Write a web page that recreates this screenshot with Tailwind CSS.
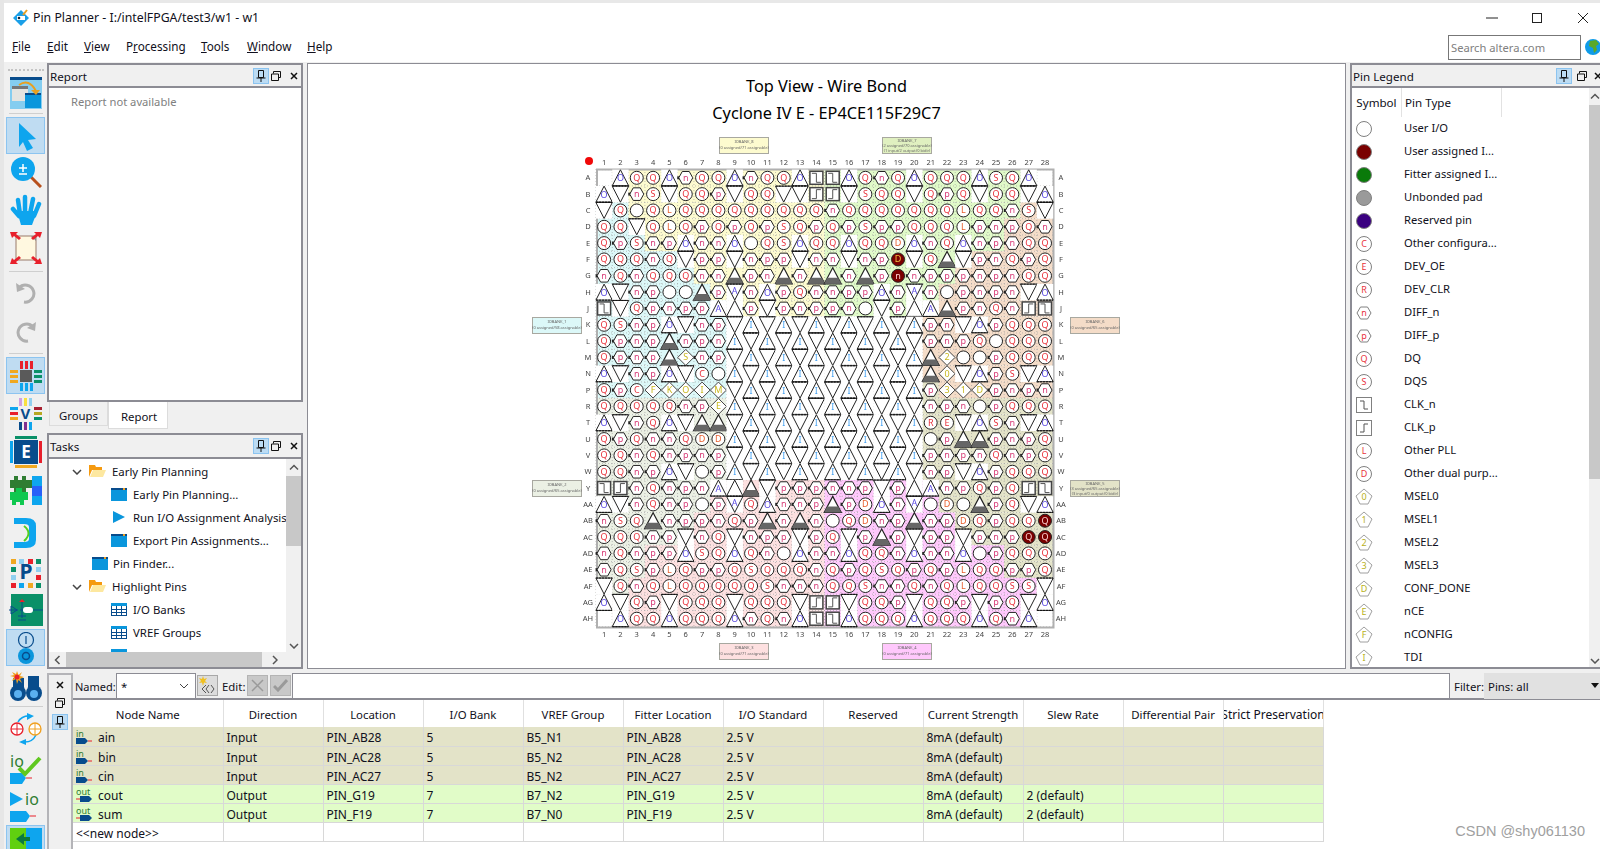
<!DOCTYPE html>
<html lang="en">
<head>
<meta charset="utf-8"/>
<title>Pin Planner</title>
<script src="https://cdn.jsdelivr.net/npm/@tailwindcss/browser@4"></script>
</head>
<body class="bg-[#f0f0f0] overflow-hidden">
<div class="flex w-[1600px] h-[849px] overflow-hidden relative font-['Noto_Sans',sans-serif] text-[11.4px] text-[#101020]">
  <div class="w-[4px] shrink-0 bg-[#e6e6e6]"></div>
  <div class="flex-1 min-w-0 flex flex-col">
    <div class="h-[3px] shrink-0 bg-[#e8e8e8]"></div>
    <!-- title bar -->
    <div class="h-[29px] bg-white flex items-center pl-[8px] shrink-0">
      <svg class="shrink-0" width="18" height="18" viewBox="0 0 18 18"><path d="M9 1 17 9 9 17 1 9Z" fill="#1a9fe8"/><path d="M5 7h8v4H5Z" fill="#fff"/><circle cx="7" cy="9" r="1.3" fill="#123"/><path d="M11 6 15 1" stroke="#e8a020" stroke-width="2"/></svg>
      <span class="ml-[3px] pt-[1px] text-[12.3px]">Pin Planner - I:/intelFPGA/test3/w1 - w1</span>
      <div class="ml-auto flex items-center">
        <svg width="46" height="16" viewBox="0 0 46 16"><path d="M18 8h12" stroke="#222"/></svg>
        <svg width="46" height="16" viewBox="0 0 46 16"><rect x="18.500" y="3.500" width="9" height="9" fill="none" stroke="#222"/></svg>
        <svg width="40" height="16" viewBox="0 0 40 16"><path d="M18 3l10 10M28 3 18 13" stroke="#222"/></svg>
      </div>
    </div>
    <!-- menu bar -->
    <div class="h-[30px] bg-white flex items-center pl-[8px] shrink-0 text-[11.7px]">
      <span class="w-[35px]"><u>F</u>ile</span>
      <span class="w-[37px]"><u>E</u>dit</span>
      <span class="w-[42px]"><u>V</u>iew</span>
      <span class="w-[75px]">P<u>r</u>ocessing</span>
      <span class="w-[46px]"><u>T</u>ools</span>
      <span class="w-[60px]"><u>W</u>indow</span>
      <span><u>H</u>elp</span>
      <div class="ml-auto flex items-center">
        <div class="w-[133px] h-[25px] border border-[#777] flex items-center pl-[2px] pt-[2px] text-[11.2px] text-[#808080]">Search altera.com</div>
        <svg class="ml-[3px] shrink-0" width="16" height="18" viewBox="0 0 16 18"><circle cx="9" cy="9" r="8" fill="#0f9be8"/><path d="M6 3l6-1 3 4-3 2 1 4-3 3-1-5-4-2Z" fill="#5aa82a"/></svg>
      </div>
    </div>
    <div class="flex-1 min-h-0 flex">
      <!-- main toolbar -->
      <div class="w-[43px] shrink-0 flex flex-col items-center overflow-hidden">
        <div class="h-[14px] w-[36px] shrink-0 flex items-center"><div class="w-full mt-[1px] border-t-2 border-dotted border-[#c4c4c4]"></div></div>
        <div class="h-[34px] shrink-0 flex items-center justify-center"><svg width="32" height="32" viewBox="0 0 32 32"><rect width="32" height="32" fill="#84cdf0"/><rect width="32" height="3" fill="#084c8c"/><rect x="2" y="9" width="16" height="15" fill="#e4e4e0"/><rect x="2" y="9" width="16" height="3" fill="#777"/><rect x="15" y="16" width="16" height="15" fill="#0a96dc"/><rect x="15" y="16" width="16" height="2" fill="#084c8c"/><path d="M9 8Q19 1 26 14" fill="none" stroke="#e8a020" stroke-width="2"/><path d="M21 13h9l-4 5Z" fill="#e8a020"/></svg></div>
        <div class="h-[7px] w-[34px] shrink-0 flex items-center"><div class="w-full border-t border-[#cfcfcf]"></div></div>
        <div class="h-[37px] w-[39px] shrink-0 bg-[#bfdcf2] border border-[#8cc4f0] flex items-center justify-center"><svg width="32" height="32" viewBox="0 0 32 32"><path d="M9 3 26 19 18 20 23 28 17 31 13 22 9 27Z" fill="#0ea5ee"/></svg></div>
        <div class="h-[36px] shrink-0 flex items-center justify-center"><svg width="32" height="32" viewBox="0 0 32 32"><path d="M19 19 31 31" stroke="#b8501c" stroke-width="3"/><circle cx="13" cy="13" r="12" fill="#0ea5ee"/><path d="M9 12h8M13 8v8M9 18h8" stroke="#fff" stroke-width="1.5"/></svg></div>
        <div class="h-[40px] shrink-0 flex items-center justify-center"><svg width="32" height="32" viewBox="0 0 32 32"><g stroke="#0ea5ee" stroke-width="4.5" stroke-linecap="round" fill="none"><path d="M10 20 8 6M15 20V3M20 20 23 5M24 22 29 10M9 22 3 15"/></g><path d="M7 17h18v6l-3 8H11Z" fill="#0ea5ee"/></svg></div>
        <div class="h-[36px] shrink-0 flex items-center justify-center"><svg width="34" height="36" viewBox="0 0 34 36"><rect x="7" y="6" width="20" height="24" fill="#fff8e0" stroke="#9a7a6a"/><path d="M22 6h5v5Z" fill="#888"/><path d="M1 2h8L7 4l5 4-2 2-5-4-2 2Z M33 2h-8l2 2-5 4 2 2 5-4 2 2Z M1 34h8l-2-2 5-4-2-2-5 4-2-2Z M33 34h-8l2-2-5-4 2-2 5 4 2-2Z" fill="#e8202c"/></svg></div>
        <div class="h-[7px] w-[34px] shrink-0 flex items-end pb-[1px]"><div class="w-full border-t border-[#cfcfcf]"></div></div>
        <div class="h-[40px] shrink-0 flex items-center justify-center"><svg width="22" height="22" viewBox="0 0 22 22"><path d="M4 6A8.500 8.500 0 1 1 9 20" fill="none" stroke="#b0b0b0" stroke-width="3"/><path d="M1 1 2 10 10 7Z" fill="#b0b0b0"/></svg></div>
        <div class="h-[38px] shrink-0 flex items-center justify-center"><svg width="22" height="22" viewBox="0 0 22 22"><path d="M18 6A8.500 8.500 0 1 0 13 20" fill="none" stroke="#b0b0b0" stroke-width="3"/><path d="M21 1 20 10 12 7Z" fill="#b0b0b0"/></svg></div>
        <div class="h-[6px] w-[34px] shrink-0 flex items-start pt-[2px]"><div class="w-full border-t border-[#cfcfcf]"></div></div>
        <div class="h-[37px] w-[39px] shrink-0 bg-[#bfdcf2] border border-[#8cc4f0] flex items-center justify-center"><svg width="32" height="32" viewBox="0 0 32 32"><rect x="10" y="10" width="12" height="12" fill="#5a5a5a"/><path d="M10 1h3v8h-3ZM15 1h3v8h-3ZM20 1h3v8h-3Z" fill="#e8202c"/><path d="M10 23h3v8h-3ZM15 23h3v8h-3ZM20 23h3v8h-3Z" fill="#0ea5ee"/><path d="M0 10h8v3H0ZM0 15h8v3H0ZM0 20h8v3H0Z" fill="#f0a820"/><path d="M24 10h8v3h-8ZM24 15h8v3h-8ZM24 20h8v3h-8Z" fill="#0a9068"/></svg></div>
        <div class="h-[40px] shrink-0 flex items-center justify-center"><svg width="32" height="32" viewBox="0 0 32 32"><path d="M9 0h3v8H9Z" fill="#d0a0e0"/><path d="M14 0h3v8h-3Z" fill="#f8e040"/><path d="M19 0h3v8h-3Z" fill="#90d0f0"/><path d="M0 9h8v3H0Z" fill="#0ea5ee"/><path d="M0 14h8v3H0Z" fill="#e8202c"/><path d="M0 19h8v3H0Z" fill="#f0a820"/><path d="M24 9h8v3h-8Z" fill="#a82030"/><path d="M24 14h8v3h-8Z" fill="#b8a820"/><path d="M24 19h8v3h-8Z" fill="#0a9068"/><path d="M9 24h3v8H9Z" fill="#084c8c"/><path d="M14 24h3v8h-3Z" fill="#803090"/><path d="M19 24h3v8h-3Z" fill="#0ea5ee"/><text x="15.500" y="21" text-anchor="middle" font-size="15" font-weight="700" fill="#084c8c">V</text></svg></div>
        <div class="h-[36px] shrink-0 flex items-center justify-center"><svg width="32" height="32" viewBox="0 0 32 32"><rect x="4" y="4" width="24" height="24" fill="#084c8c"/><path d="M5 0h22v3H5Z" fill="#0a9068"/><path d="M5 29h22v3H5Z" fill="#f0a820"/><path d="M0 5h3v22H0Z" fill="#0ea5ee"/><path d="M29 5h3v22h-3Z" fill="#e8202c"/><text x="16" y="22" text-anchor="middle" font-size="17" font-weight="700" fill="#fff">E</text></svg></div>
        <div class="h-[42px] shrink-0 flex items-center justify-center"><svg width="32" height="30" viewBox="0 0 32 30"><path d="M4 0h4v4h4V0h4v4h6v8h-6v5H4v-5H0V4h4Z" fill="#2f7d32"/><path d="M6 12h6v4h6v8h-4v5h-4v-3H6v3H2v-5H0v-8h6Z" fill="#10c850"/><rect x="22" y="0" width="10" height="10" fill="#0ea5ee"/><rect x="22" y="10" width="10" height="10" fill="#2860f8"/><rect x="22" y="20" width="10" height="9" fill="#0ea5ee"/></svg></div>
        <div class="h-[42px] shrink-0 flex items-center justify-center"><svg width="26" height="32" viewBox="0 0 26 32"><path d="M1 1h12q10 0 10 8v14q0 8-10 8H1v-6h10q5 0 5-3V10q0-3-5-3H1Z" fill="#0ea5ee"/><path d="M11 9q9 7 0 15" fill="none" stroke="#50d020" stroke-width="2"/></svg></div>
        <div class="h-[37px] shrink-0 flex items-center justify-center"><svg width="32" height="30" viewBox="0 0 32 30"><rect x="1" y="1" width="5" height="5" fill="#f0a820"/><rect x="9" y="1" width="5" height="5" fill="#90d0f0"/><rect x="18" y="1" width="5" height="5" fill="#e8202c"/><rect x="26" y="1" width="5" height="5" fill="#0a9068"/><rect x="1" y="9" width="5" height="5" fill="#0a9068"/><rect x="26" y="9" width="5" height="5" fill="#90d0f0"/><rect x="1" y="17" width="5" height="5" fill="#90d0f0"/><rect x="26" y="17" width="5" height="5" fill="#e8202c"/><rect x="1" y="25" width="5" height="5" fill="#e8202c"/><rect x="9" y="25" width="5" height="5" fill="#0ea5ee"/><rect x="18" y="25" width="5" height="5" fill="#f0a820"/><rect x="26" y="25" width="5" height="5" fill="#0a9068"/><text x="16" y="21" text-anchor="middle" font-size="21" font-weight="700" fill="#084c8c">P</text></svg></div>
        <div class="h-[38px] shrink-0 flex items-center justify-center"><svg width="34" height="32" viewBox="0 0 34 32"><rect x="2" y="0" width="32" height="32" fill="#0a9068"/><path d="M0 16h9M24 16h10M11 16h10M13 6v18M9 22h8M9 26h8" stroke="#084c8c"/><path d="M2 12l6 4-6 4Z" fill="none" stroke="#084c8c"/><rect x="14" y="13" width="10" height="6" rx="3" fill="#fff"/><path d="M13 5l3 3h-6Z" fill="#e8202c"/></svg></div>
        <div class="h-[37px] w-[39px] shrink-0 bg-[#bfdcf2] border border-[#8cc4f0] flex flex-col items-center justify-center"><svg width="24" height="32" viewBox="0 0 24 32"><circle cx="12" cy="8" r="7.500" fill="none" stroke="#084c8c" stroke-width="1.200"/><path d="M12 4v8" stroke="#084c8c" stroke-width="1.200"/><circle cx="12" cy="24" r="8" fill="#0a96dc"/><circle cx="12" cy="24" r="3.500" fill="none" stroke="#084c8c" stroke-width="1.500"/></svg></div>
        <div class="h-[40px] shrink-0 flex items-center justify-center"><svg width="32" height="32" viewBox="0 0 32 32"><circle cx="8" cy="23" r="8" fill="#084c8c"/><circle cx="24" cy="23" r="8" fill="#084c8c"/><circle cx="8" cy="24" r="4" fill="#5ab0f0"/><circle cx="24" cy="24" r="4" fill="#5ab0f0"/><rect x="3" y="8" width="11" height="12" fill="#084c8c"/><rect x="18" y="6" width="11" height="14" fill="#084c8c"/><path d="M7 1l1.500 4L12 2l-2 4 4 1-4 2 2 4-3.500-3L7 14l-1-5-4 2 2-4-4-1 4-1-2-3 4 2Z" fill="#f0a020"/><circle cx="7" cy="7" r="2.500" fill="#e8202c"/></svg></div>
        <div class="h-[3px] w-[34px] shrink-0 border-t border-[#cfcfcf]"></div>
        <div class="h-[40px] shrink-0 flex items-center justify-center"><svg width="32" height="32" viewBox="0 0 32 32"><path d="M8 9Q12 2 21 3M26 22q-4 8-13 7" fill="none" stroke="#0ea5ee" stroke-width="1.500"/><path d="M17 0l7 3-7 4Z M16 26l-7 3 7 3Z" fill="#0ea5ee"/><circle cx="7" cy="16" r="6" fill="#fff" stroke="#e8202c" stroke-width="1.300"/><path d="M1 16h12M7 10v12" stroke="#e8202c"/><circle cx="25" cy="16" r="6" fill="#fff" stroke="#f0a020" stroke-width="1.300"/><path d="M19 16h12M25 10v12" stroke="#f0a020"/></svg></div>
        <div class="h-[39px] shrink-0 flex items-center justify-center"><svg class="shrink-0" width="32" height="44" viewBox="0 -6 32 44"><text x="0" y="14" font-size="16" fill="#2f7d32">io</text><path d="M0 20h12l4 5-4 6H0Z" fill="#0ea5ee"/><path d="M16 25h6" stroke="#e8202c"/><path d="M9 15l6 6L30 5" fill="none" stroke="#60c820" stroke-width="4"/></svg></div>
        <div class="h-[37px] shrink-0 flex items-center justify-center"><svg class="shrink-0" width="32" height="44" viewBox="0 -6 32 44"><path d="M0 1 13 8 0 15Z" fill="#0ea5ee"/><text x="15" y="14" font-size="16" fill="#2f7d32">io</text><path d="M0 20h16l4 5-4 6H0Z" fill="#0ea5ee"/><path d="M20 25h6" stroke="#e8202c"/></svg></div>
        <div class="h-[37px] w-[39px] shrink-0 bg-[#bfdcf2] border border-[#8cc4f0] flex items-center justify-center"><svg width="32" height="32" viewBox="0 0 32 32"><rect width="16" height="32" fill="#60d010"/><rect x="16" width="16" height="32" fill="#0ea5ee"/><path d="M6 11 14 5v4h6v4h-6v4Z" fill="#0a7a40"/></svg></div>
      </div>
      <div class="flex-1 min-w-0 flex flex-col">
        <div class="h-[610px] shrink-0 flex pt-[1px]">
          <!-- left docks -->
          <div class="w-[256px] shrink-0 flex flex-col">
            <div class="h-[339px] border-2 border-[#8c8c94] flex flex-col">
              <div class="h-[23px] shrink-0 flex items-center border-b-2 border-[#8c8c94] pl-[1px]">
                <span class="mt-[2px] text-[11.6px]">Report</span>
                <div class="ml-auto flex items-center pr-[3px]">
                  <svg width="16" height="16" viewBox="0 0 16 16"><rect x=".5" y=".5" width="15" height="15" fill="#bcdcf4" stroke="#8cc4f0"/><path d="M5.500 2.500h5v7h-5ZM3.500 10h9M8 10v4" fill="none" stroke="#111"/></svg>
                  <svg class="ml-[2px]" width="10" height="10" viewBox="0 0 10 10"><path d="M2.500 2.500V.5h7v6h-2M.5 3h7v6.500h-7Z" fill="none" stroke="#111"/></svg>
                  <svg class="ml-[9px]" width="8" height="8" viewBox="0 0 8 8"><path d="M1 1l6 6M7 1 1 7" stroke="#111" stroke-width="1.500"/></svg>
                </div>
              </div>
              <div class="flex-1 bg-white pl-[22px] pt-[6px] text-[11.2px] text-[#808080]">Report not available</div>
            </div>
            <div class="h-[27px] shrink-0 flex pl-[2px]">
              <div class="w-[59px] h-[24px] pt-[4px] border border-t-0 border-[#dcdcdc] flex items-center justify-center">Groups</div>
              <div class="w-[60px] h-[27px] pt-[4px] pl-[2px] bg-white border border-t-0 border-[#dcdcdc] flex items-center justify-center">Report</div>
            </div>
            <div class="mt-[4px] h-[236px] border-2 border-[#8c8c94] flex flex-col">
              <div class="h-[24px] shrink-0 flex items-center border-b-2 border-[#8c8c94] pl-[1px]">
                <span class="mt-[1px] text-[11.6px]">Tasks</span>
                <div class="ml-auto flex items-center pr-[3px]">
                  <svg width="16" height="16" viewBox="0 0 16 16"><rect x=".5" y=".5" width="15" height="15" fill="#bcdcf4" stroke="#8cc4f0"/><path d="M5.500 2.500h5v7h-5ZM3.500 10h9M8 10v4" fill="none" stroke="#111"/></svg>
                  <svg class="ml-[2px]" width="10" height="10" viewBox="0 0 10 10"><path d="M2.500 2.500V.5h7v6h-2M.5 3h7v6.500h-7Z" fill="none" stroke="#111"/></svg>
                  <svg class="ml-[9px]" width="8" height="8" viewBox="0 0 8 8"><path d="M1 1l6 6M7 1 1 7" stroke="#111" stroke-width="1.500"/></svg>
                </div>
              </div>
              <div class="flex-1 min-h-0 flex">
                <div class="w-[237px] shrink-0 bg-white overflow-hidden">
                  <div class="h-[23px] mt-[1px] flex items-center pl-[23px]"><svg class="shrink-0" width="10" height="6" viewBox="0 0 10 6"><path d="M1 1l4 4 4-4" fill="none" stroke="#444" stroke-width="1.500"/></svg><svg class="ml-[7px] shrink-0" width="17" height="13" viewBox="0 0 17 13"><path d="M0 0h6l1 2h6v3H3L0 12Z" fill="#f59a10"/><path d="M4 5h13l-3 7H1Z" fill="#fde8a0"/></svg><span class="ml-[6px] whitespace-nowrap">Early Pin Planning</span></div>
                  <div class="h-[23px] flex items-center pl-[62px]"><svg class="shrink-0" width="16" height="13" viewBox="0 0 16 13"><rect width="16" height="13" fill="#0a96dc"/><rect width="16" height="2" fill="#084c8c"/><rect x="12" width="2" height="2" fill="#f0a020"/></svg><span class="ml-[6px] whitespace-nowrap">Early Pin Planning...</span></div>
                  <div class="h-[23px] flex items-center pl-[62px]"><svg class="shrink-0" width="16" height="13" viewBox="0 0 16 13"><path d="M2 0 14 6 2 12Z" fill="#0a96dc"/></svg><span class="ml-[6px] whitespace-nowrap">Run I/O Assignment Analysis</span></div>
                  <div class="h-[23px] flex items-center pl-[62px]"><svg class="shrink-0" width="16" height="13" viewBox="0 0 16 13"><rect width="16" height="13" fill="#0a96dc"/><rect width="16" height="2" fill="#084c8c"/><rect x="12" width="2" height="2" fill="#f0a020"/></svg><span class="ml-[6px] whitespace-nowrap">Export Pin Assignments...</span></div>
                  <div class="h-[23px] flex items-center pl-[43px]"><svg class="shrink-0" width="16" height="13" viewBox="0 0 16 13"><rect width="16" height="13" fill="#0a96dc"/><rect width="16" height="2" fill="#084c8c"/><rect x="12" width="2" height="2" fill="#f0a020"/></svg><span class="ml-[5px] whitespace-nowrap">Pin Finder...</span></div>
                  <div class="h-[23px] flex items-center pl-[23px]"><svg class="shrink-0" width="10" height="6" viewBox="0 0 10 6"><path d="M1 1l4 4 4-4" fill="none" stroke="#444" stroke-width="1.500"/></svg><svg class="ml-[7px] shrink-0" width="17" height="13" viewBox="0 0 17 13"><path d="M0 0h6l1 2h6v3H3L0 12Z" fill="#f59a10"/><path d="M4 5h13l-3 7H1Z" fill="#fde8a0"/></svg><span class="ml-[6px] whitespace-nowrap">Highlight Pins</span></div>
                  <div class="h-[23px] flex items-center pl-[62px]"><svg class="shrink-0" width="16" height="13" viewBox="0 0 16 13"><rect x=".5" y=".5" width="15" height="12" fill="#fff" stroke="#084c8c"/><rect width="16" height="3" fill="#0a96dc"/><path d="M0 6.500h16M0 9.500h16M5.500 3v10M10.500 3v10" stroke="#084c8c"/></svg><span class="ml-[6px] whitespace-nowrap">I/O Banks</span></div>
                  <div class="h-[23px] flex items-center pl-[62px]"><svg class="shrink-0" width="16" height="13" viewBox="0 0 16 13"><rect x=".5" y=".5" width="15" height="12" fill="#fff" stroke="#084c8c"/><rect width="16" height="3" fill="#0a96dc"/><path d="M0 6.500h16M0 9.500h16M5.500 3v10M10.500 3v10" stroke="#084c8c"/></svg><span class="ml-[6px] whitespace-nowrap">VREF Groups</span></div>
                  <div class="h-[23px] flex items-center pl-[62px]"><svg class="shrink-0" width="16" height="13" viewBox="0 0 16 13"><rect x=".5" y=".5" width="15" height="12" fill="#fff" stroke="#084c8c"/><rect width="16" height="3" fill="#0a96dc"/><path d="M0 6.500h16M0 9.500h16M5.500 3v10M10.500 3v10" stroke="#084c8c"/></svg></div>
                </div>
                <div class="w-[15px] shrink-0 flex flex-col items-center bg-[#f0f0f0]">
                  <svg class="h-[17px] shrink-0" width="10" height="6" viewBox="0 0 10 6"><path d="M1 5l4-4 4 4" fill="none" stroke="#555" stroke-width="1.500"/></svg>
                  <div class="w-full h-[70px] shrink-0 bg-[#c8c8c8]"></div>
                  <svg class="mt-auto mb-[3px] shrink-0" width="10" height="6" viewBox="0 0 10 6"><path d="M1 1l4 4 4-4" fill="none" stroke="#555" stroke-width="1.500"/></svg>
                </div>
              </div>
              <div class="h-[15px] shrink-0 flex items-center">
                <svg class="w-[17px] shrink-0" width="6" height="10" viewBox="0 0 6 10"><path d="M5 1 1 5l4 4" fill="none" stroke="#555" stroke-width="1.500"/></svg>
                <div class="w-[196px] h-full bg-[#c8c8c8]"></div>
                <svg class="ml-[10px]" width="6" height="10" viewBox="0 0 6 10"><path d="M1 1l4 4-4 4" fill="none" stroke="#555" stroke-width="1.500"/></svg>
              </div>
            </div>
          </div>
          <!-- chip canvas -->
          <div class="ml-[4px] w-[1039px] h-[606px] shrink-0 relative bg-white border border-[#8c8c94] overflow-hidden">
            <svg id="chip" class="absolute left-0 top-0 blur-[0.35px]" width="1037" height="604" viewBox="308 64 1037 604"></svg>
            <div class="relative pt-[9px] text-center text-[16.3px] leading-[27px] text-black">
              <div>Top View - Wire Bond</div>
              <div>Cyclone IV E - EP4CE115F29C7</div>
            </div>
          </div>
          <!-- pin legend -->
          <div class="ml-[4px] flex-1 min-w-0 h-[606px] border-2 border-r-0 border-[#8c8c94] flex flex-col">
            <div class="h-[23px] shrink-0 flex items-center border-b-2 border-[#8c8c94] pl-[1px]">
              <span class="mt-[2px] text-[11.6px]">Pin Legend</span>
              <div class="ml-auto flex items-center">
                <svg width="16" height="16" viewBox="0 0 16 16"><rect x=".5" y=".5" width="15" height="15" fill="#bcdcf4" stroke="#8cc4f0"/><path d="M5.500 2.500h5v7h-5ZM3.500 10h9M8 10v4" fill="none" stroke="#111"/></svg>
                <svg class="ml-[5px]" width="10" height="10" viewBox="0 0 10 10"><path d="M2.500 2.500V.5h7v6h-2M.5 3h7v6.500h-7Z" fill="none" stroke="#111"/></svg>
                <svg class="ml-[7px]" width="6" height="8" viewBox="0 0 6 8"><path d="M1 1l6 6M7 1 1 7" stroke="#111" stroke-width="1.500"/></svg>
              </div>
            </div>
            <div class="flex-1 min-h-0 flex text-[11.2px]">
              <div class="flex-1 min-w-0 bg-white overflow-hidden">
                <div class="flex h-[29px] text-[11.6px]">
                  <div class="w-[50px] flex items-center justify-center border-r border-[#e2e2e2]">Symbol</div>
                  <div class="w-[100px] flex items-center pl-[3px] border-r border-[#e2e2e2]">Pin Type</div>
                </div>
                <div id="legend"></div>
              </div>
              <div class="w-[11px] shrink-0 flex flex-col items-center">
                <svg class="h-[17px] shrink-0" width="10" height="6" viewBox="0 0 10 6"><path d="M1 5l4-4 4 4" fill="none" stroke="#555" stroke-width="1.500"/></svg>
                <div class="w-full h-[374px] shrink-0 bg-[#c8c8c8]"></div>
                <svg class="mt-auto mb-[3px] shrink-0" width="10" height="6" viewBox="0 0 10 6"><path d="M1 1l4 4 4-4" fill="none" stroke="#555" stroke-width="1.500"/></svg>
              </div>
            </div>
          </div>
        </div>
        <!-- node table dock -->
        <div class="flex-1 min-h-0 flex pt-[1px]">
          <div class="w-[26px] shrink-0 border-l-2 border-r-2 border-t-2 border-[#b4b4b8] flex flex-col items-center pt-[6px]">
            <svg width="8" height="8" viewBox="0 0 8 8"><path d="M1 1l6 6M7 1 1 7" stroke="#111" stroke-width="1.500"/></svg>
            <svg class="mt-[9px]" width="10" height="10" viewBox="0 0 10 10"><path d="M2.500 2.500V.5h7v6h-2M.5 3h7v6.500h-7Z" fill="none" stroke="#111"/></svg>
            <svg class="mt-[6px]" width="16" height="16" viewBox="0 0 16 16"><rect x=".5" y=".5" width="15" height="15" fill="#bcdcf4" stroke="#8cc4f0"/><path d="M5.500 2.500h5v7h-5ZM3.500 10h9M8 10v4" fill="none" stroke="#111"/></svg>
          </div>
          <div class="flex-1 min-w-0 flex flex-col">
            <div class="h-[27px] shrink-0 flex items-center pl-[2px] border-b-2 border-[#8c8c94]">
              <span class="w-[41px] mt-[3px] text-[11px] whitespace-nowrap">Named:</span>
              <div class="w-[80px] h-[26px] bg-white border border-[#8c8c94] flex items-center pl-[4px] pr-[6px] justify-between"><span class="mt-[3px]">*</span><svg width="10" height="6" viewBox="0 0 10 6"><path d="M1 1l4 4 4-4" fill="none" stroke="#444"/></svg></div>
              <div class="ml-[1px] w-[21px] h-[21px] bg-[#dcdcdc] border border-[#a8a8a8] flex items-center justify-center"><svg width="19" height="19" viewBox="0 0 19 19"><path d="M5 0l1 3 3-1-2 3 2 2-3-.5L5 10 4 6.500 1 7l2-2-2-3 3 1Z" fill="#f0c020"/><path d="M8 9l-4 4 4 4M11 9l-3 4 3 4M13 9l3 4-3 4" fill="none" stroke="#555"/></svg></div>
              <span class="ml-[4px] w-[25px] mt-[3px]">Edit:</span>
              <div class="w-[21px] h-[21px] bg-[#c8c8c8] border border-[#b4b4b4] flex items-center justify-center"><svg width="13" height="13" viewBox="0 0 13 13"><path d="M1 1l11 11M12 1 1 12" stroke="#9a9a9a" stroke-width="1.500"/></svg></div>
              <div class="ml-[2px] w-[21px] h-[21px] bg-[#c8c8c8] border border-[#b4b4b4] flex items-center justify-center"><svg width="15" height="13" viewBox="0 0 15 13"><path d="M1 7l4 4 9-10" fill="none" stroke="#9a9a9a" stroke-width="3"/></svg></div>
              <div class="ml-[1px] w-[1158px] h-[26px] bg-white border border-[#8c8c94]"></div>
              <span class="ml-[4px] w-[30px] mt-[3px]">Filter:</span>
              <div class="flex-1 h-[26px] bg-[#e1e1e1] flex items-center pl-[4px] pr-[1px] justify-between"><span class="mt-[3px]">Pins: all</span><svg width="8" height="5" viewBox="0 0 8 5"><path d="M0 0h8L4 5Z" fill="#111"/></svg></div>
            </div>
            <div class="flex-1 min-h-0 bg-white overflow-hidden text-[12px]">
              <table class="table-fixed border-collapse w-[1250px] [&_td]:border-r [&_td]:border-b [&_td]:border-[#d8d8d8] [&_td]:pl-[3px] [&_td]:pt-[4px] [&_td]:pb-0 [&_td]:pr-0 [&_td]:leading-[14px] [&_td]:h-[19px] [&_td]:whitespace-nowrap [&_td]:overflow-hidden [&_th]:border-r [&_th]:border-[#e0e0e0] [&_th]:font-normal [&_th]:text-[11.4px] [&_th]:h-[27px] [&_th]:pt-[2px] [&_th]:pb-0 [&_th]:px-0 [&_th]:whitespace-nowrap">
                <colgroup><col class="w-[150px]"/><col class="w-[100px]"/><col class="w-[100px]"/><col class="w-[100px]"/><col class="w-[100px]"/><col class="w-[100px]"/><col class="w-[100px]"/><col class="w-[100px]"/><col class="w-[100px]"/><col class="w-[100px]"/><col class="w-[100px]"/><col class="w-[100px]"/></colgroup>
                <tr><th>Node Name</th><th>Direction</th><th>Location</th><th>I/O Bank</th><th>VREF Group</th><th>Fitter Location</th><th>I/O Standard</th><th>Reserved</th><th>Current Strength</th><th>Slew Rate</th><th>Differential Pair</th><th><div class="w-full flex justify-center overflow-hidden text-[12px]"><span class="shrink-0">Strict Preservation</span></div></th></tr>
                <tr class="bg-[#e3e3c8]"><td><div class="flex items-center h-[14px]"><svg class="shrink-0" width="18" height="18" viewBox="0 0 18 18"><text x="0" y="8" font-size="9" fill="#2f7d32">in</text><path d="M0 9h9l3 3-3 3H0Z" fill="#084c8c"/><path d="M12 12h4" stroke="#e8202c"/></svg><span class="ml-[4px]">ain</span></div></td><td>Input</td><td>PIN_AB28</td><td>5</td><td>B5_N1</td><td>PIN_AB28</td><td>2.5 V</td><td></td><td>8mA (default)</td><td></td><td></td><td></td></tr>
                <tr class="bg-[#e3e3c8]"><td><div class="flex items-center h-[14px]"><svg class="shrink-0" width="18" height="18" viewBox="0 0 18 18"><text x="0" y="8" font-size="9" fill="#2f7d32">in</text><path d="M0 9h9l3 3-3 3H0Z" fill="#084c8c"/><path d="M12 12h4" stroke="#e8202c"/></svg><span class="ml-[4px]">bin</span></div></td><td>Input</td><td>PIN_AC28</td><td>5</td><td>B5_N2</td><td>PIN_AC28</td><td>2.5 V</td><td></td><td>8mA (default)</td><td></td><td></td><td></td></tr>
                <tr class="bg-[#e3e3c8]"><td><div class="flex items-center h-[14px]"><svg class="shrink-0" width="18" height="18" viewBox="0 0 18 18"><text x="0" y="8" font-size="9" fill="#2f7d32">in</text><path d="M0 9h9l3 3-3 3H0Z" fill="#084c8c"/><path d="M12 12h4" stroke="#e8202c"/></svg><span class="ml-[4px]">cin</span></div></td><td>Input</td><td>PIN_AC27</td><td>5</td><td>B5_N2</td><td>PIN_AC27</td><td>2.5 V</td><td></td><td>8mA (default)</td><td></td><td></td><td></td></tr>
                <tr class="bg-[#e1fcc8]"><td><div class="flex items-center h-[14px]"><svg class="shrink-0" width="18" height="18" viewBox="0 0 18 18"><text x="0" y="8" font-size="9" fill="#2f7d32">out</text><path d="M4 9h9l3 3-3 3H4Z" fill="#084c8c"/><path d="M0 12h4" stroke="#e8202c"/></svg><span class="ml-[4px]">cout</span></div></td><td>Output</td><td>PIN_G19</td><td>7</td><td>B7_N2</td><td>PIN_G19</td><td>2.5 V</td><td></td><td>8mA (default)</td><td>2 (default)</td><td></td><td></td></tr>
                <tr class="bg-[#e1fcc8]"><td><div class="flex items-center h-[14px]"><svg class="shrink-0" width="18" height="18" viewBox="0 0 18 18"><text x="0" y="8" font-size="9" fill="#2f7d32">out</text><path d="M4 9h9l3 3-3 3H4Z" fill="#084c8c"/><path d="M0 12h4" stroke="#e8202c"/></svg><span class="ml-[4px]">sum</span></div></td><td>Output</td><td>PIN_F19</td><td>7</td><td>B7_N0</td><td>PIN_F19</td><td>2.5 V</td><td></td><td>8mA (default)</td><td>2 (default)</td><td></td><td></td></tr>
                <tr><td>&lt;&lt;new node&gt;&gt;</td><td></td><td></td><td></td><td></td><td></td><td></td><td></td><td></td><td></td><td></td><td></td></tr>
              </table>
            </div>
          </div>
        </div>
      </div>
    </div>
  </div>
  <div class="absolute right-[15px] bottom-[6px] font-['Liberation_Sans',sans-serif] text-[14.5px] text-[#a0a0a0]">CSDN @shy061130</div>
</div>
<script>
  // pin map, one string per row, 28 chars
  const rows = [
    ".^QQ^nQQ^nQQ^[[^QnQ^QQQ^SQ^.",
    "^vnSvQQpvQQvv]]vSQQvQpQvQQv^",
    "vQoQLQQQQQQQQQnQQQQQQQLQQnSv",
    "QQvQLQpQpQpSQpQpSppQQQLpnpQn",
    "QpSnp^nn^oQS^QQ^QQD^nQ^npnQQ",
    "QQQnQvppvnppvnnvnpXvQGvpnQpQ",
    "nQnQQQnnGpnGnGGnGpNnpppnpnQQ",
    "^vnpooGpan^pQnnpp^nanopnpnv^",
    "[vQpnppAupvpnppnovpuAGpnQn][",
    "QSnp^vnp************pnv^pQQQ",
    "QpnpGnpn************pnpQoQQQ",
    "QpnpGsnp************G2oopQQQ",
    "^vnp^vCo************G0v^pSv^",
    "QpCfkwjm************p31dpnpn",
    "QQQQQnpe************npnopQQQ",
    "^vnQ^vGG************REv^Snv^",
    "QpQnnQDD************opGGpnpQ",
    "QQnQnpnp************pnpnQnpQ",
    "QQnp^vop************npv^pQQQ",
    "[]nQnpnAuGvpppnnpvpuAnpQpQ][",
    "^vnQnpopaQ^nnpGpD^naoDoGpQv^",
    "nSQGnppnQpGnGnoQDnpGnpDQpQQx",
    "QQQnpvnQvnppvpQvpGpvppvpnpxx",
    "nQnpp^SQ^Qno^nn^QQn^nn^opQQQ",
    "nQSpLQppQSQQQnQpQSQpQpLQQppQ",
    "vQnQLQQQQQSnnnQQSnnQnQLQQSSv",
    "^vQpvQQQvQQQv]]vQQpvQQpvpQv^",
    ".^QQ^QQQ^nQn^[[^QQQ^QQQ^Qn^."
  ];
  const rowNames = "A B C D E F G H J K L M N P R T U V W Y AA AB AC AD AE AF AG AH".split(" ");
  const bankColor = { y:"#fdfbcf", g:"#e0fac8", b:"#dcf8f8", a:"#ebf0e4", r:"#fde0e0", m:"#ffc8fc", k:"#e3e3c8", h:"#f4dcc8", w:"#ffffff" };
  // per row: bank letter, first col, last col
  const banks = [
    "y2-14 g15-27", "b1-1 y2-14 g15-27 h28-28", "b1-2 y3-14 g15-26 h27-28", "b1-3 y4-14 g15-25 h26-28",
    "b1-3 y4-14 g15-25 h26-28", "b1-5 y6-14 g15-23 h24-28", "b1-6 y7-14 g15-22 h23-28", "b1-7 y8-14 g15-21 h22-28",
    "b1-8 y9-14 g15-21 h22-28", "b1-8 w9-20 h21-28", "b1-8 w9-20 h21-28", "b1-8 w9-20 h21-28", "b1-8 w9-20 h21-28",
    "b1-8 w9-20 k21-21 h22-28", "a1-8 w9-20 k21-28", "a1-8 w9-20 k21-28", "a1-8 w9-20 k21-28", "a1-8 w9-20 k21-28",
    "a1-8 w9-20 k21-28", "a1-8 r9-14 m15-21 k22-28", "a1-7 r8-14 m15-21 k22-28", "a1-6 r7-14 m15-22 k23-28",
    "a1-5 r6-14 m15-22 k23-28", "a1-3 r4-14 m15-25 k26-28", "a1-3 r4-14 m15-25 k26-28", "a1-2 r3-14 m15-27 k28-28",
    "a1-1 r2-14 m15-27 k28-28", "r2-14 m15-27"
  ];
  const STEP = 16.33, X0 = 604.1, Y0 = 177.8;
  const px = c => X0 + STEP * c, py = r => Y0 + STEP * r;
  const RED = "#e8323c", PINK = "#d8407a", YEL = "#c8b820", FONT = "'Noto Sans',sans-serif";
  const label = (x, y, t, col, size) => `<text x="${x}" y="${y}" text-anchor="middle" font-family="${FONT}" font-size="${size || 9}" fill="${col}">${t}</text>`;

  function pin(ch, x, y, r, c) {
    const k = rows[r][c];
    if (k === "*") ch = (c + r) % 2 === 0 ? "I" : "v";
    switch (ch) {
      case ".": return "";
      case "o": return `<circle cx="${x}" cy="${y}" r="6.5" fill="#fff" stroke="#222"/>`;
      case "n": case "p": {
        const pts = [[-7,0],[-3.5,-6.3],[3.5,-6.3],[7,0],[3.5,6.3],[-3.5,6.3]].map(p => (x+p[0])+","+(y+p[1])).join(" ");
        return `<rect x="${x-8.5}" y="${y-1.5}" width="3" height="3" fill="#222"/><polygon points="${pts}" fill="#fff" stroke="#222"/>` + label(x, y+3, ch, PINK);
      }
      case "^": case "u": case "I": case "A": {
        const t = ch === "^" ? "O" : ch === "I" ? "I" : ch === "A" ? "A" : "";
        const col = ch === "I" ? "#4aa3f0" : "#5a4ae0";
        return `<rect x="${x-8.2}" y="${y-8.2}" width="16.4" height="16.4" fill="#fff"/><path d="M${x} ${y-8}L${x+8.2} ${y+8}H${x-8.2}Z" fill="#fff" stroke="#222"/><path d="M${x-8} ${y+8}H${x+8}" stroke="#111" stroke-dasharray="2 1"/>` + label(x, y+3.5, t, col);
      }
      case "v": case "a": {
        return `<rect x="${x-8.2}" y="${y-8.2}" width="16.4" height="16.4" fill="#fff"/><path d="M${x} ${y+8}L${x+8.2} ${y-8}H${x-8.2}Z" fill="#fff" stroke="#222"/><path d="M${x-8} ${y-8}H${x+8}" stroke="#111" stroke-dasharray="2 1"/>` + (ch === "a" ? label(x, y+1.5, "A", "#5a4ae0") : "");
      }
      case "G": return `<path d="M${x} ${y-8}L${x+8.5} ${y+8}H${x-8.5}Z" fill="#fff" stroke="#222" stroke-width="1.2"/><path d="M${x-5.5} ${y+2}H${x+5.5}L${x+8.5} ${y+8}H${x-8.5}Z" fill="#666"/>`;
      case "[": case "]": {
        const d = ch === "[" ? `M${x-4.5} ${y-4.5}H${x}V${y+4.5}H${x+4.5}` : `M${x-4.5} ${y+4.5}H${x}V${y-4.5}H${x+4.5}`;
        return `<rect x="${x-6.5}" y="${y-6.5}" width="13" height="13" fill="#fff" stroke="#444" stroke-width="1.5"/><path d="${d}" fill="none" stroke="#555"/>`;
      }
      case "x": case "X": case "N": {
        const t = ch === "x" ? "Q" : ch === "X" ? "D" : "n";
        return `<circle cx="${x}" cy="${y}" r="6.5" fill="#7a0000" stroke="#222"/>` + label(x, y+3, t, ch === "X" ? "#f0c040" : "#ffd0d0");
      }
      case "s": case "f": case "k": case "w": case "j": case "m": case "e": case "d":
      case "0": case "1": case "2": case "3": {
        const t = { s:"S", f:"F", k:"K", w:"O", j:"I", m:"M", e:"E", d:"D" }[ch] || ch;
        return `<path d="M${x-8} ${y}L${x} ${y-8}L${x+8} ${y}L${x} ${y+8}Z" fill="#fff" stroke="#444"/>` + label(x, y+3, t, YEL);
      }
      default: {
        const col = (ch === "L" || ch === "D") ? "#e86030" : RED;
        return `<circle cx="${x}" cy="${y}" r="6.5" fill="#fff" stroke="#222"/>` + label(x, y+3, ch, col);
      }
    }
  }

  function bankBox(x, y, fill, lines) {
    let s = `<rect x="${x+.5}" y="${y+.5}" width="49" height="16" fill="${fill}" stroke="#a8a8a0"/>`;
    lines.forEach((t, i) => { s += label(x+25, y + (lines.length === 2 ? 6 + i*6 : 5 + i*5), t, "#666", 4); });
    return s;
  }

  let out = "";
  // bank fill colours
  banks.forEach((line, r) => line.split(" ").forEach(b => {
    const [from, to] = b.slice(1).split("-").map(Number);
    out += `<rect x="${px(from-1)-8.17}" y="${py(r)-8.17}" width="${(to-from+1)*STEP}" height="${STEP}" fill="${bankColor[b[0]]}"/>`;
  }));
  // dotted cell grid
  for (let i = 0; i <= 28; i++) {
    out += `<path d="M${px(i)-8.17} 169V627" stroke="#999" stroke-dasharray="1 2" stroke-width=".6"/><path d="M596 ${py(i)-8.17}H1054" stroke="#999" stroke-dasharray="1 2" stroke-width=".6"/>`;
  }
  out += `<path d="M597 627.5V169.500H1053.500V627.500H597Z" fill="none" stroke="#b0b0b0" stroke-width="2"/>`;
  // labels round the package
  out += `<circle cx="589" cy="161" r="4" fill="#f00808"/>`;
  for (let c = 0; c < 28; c++) {
    out += label(px(c), 165, c+1, "#444", 7.5) + label(px(c), 637, c+1, "#444", 7.5);
  }
  rowNames.forEach((n, r) => { out += label(588, py(r)+2.5, n, "#444", 7.5) + label(1061, py(r)+2.5, n, "#444", 7.5); });
  // pins, rows drawn top down so stacked triangles overlap like the tool
  rows.forEach((line, r) => { for (let c = 0; c < 28; c++) out += pin(line[c], px(c), py(r), r, c); });
  // I/O bank boxes
  out += bankBox(719, 137, "#fdfbcf", ["IOBANK_8", "(0 assigned/71 assignable)"]);
  out += bankBox(882, 137, "#e0f0c0", ["IOBANK_7", "(2 assigned/70 assignable)", "(1 input/2 output/0 bidir)"]);
  out += bankBox(532, 317, "#dcf8f8", ["IOBANK_1", "(0 assigned/58 assignable)"]);
  out += bankBox(532, 480, "#ebf0e4", ["IOBANK_2", "(0 assigned/65 assignable)"]);
  out += bankBox(719, 643, "#fde0e0", ["IOBANK_3", "(0 assigned/71 assignable)"]);
  out += bankBox(882, 643, "#ffc8fc", ["IOBANK_4", "(0 assigned/71 assignable)"]);
  out += bankBox(1070, 317, "#f4dcc8", ["IOBANK_6", "(0 assigned/65 assignable)"]);
  out += bankBox(1070, 480, "#e3e3c8", ["IOBANK_5", "(3 assigned/65 assignable)", "(3 input/0 output/0 bidir)"]);
  document.getElementById("chip").innerHTML = out;

  // legend list
  const legend = [
    ["c","#fff","","User I/O"],["c","#7a0000","","User assigned I..."],["c","#0a7a0a","","Fitter assigned I..."],
    ["c","#9a9a9a","","Unbonded pad"],["c","#3a0080","","Reserved pin"],["c","#fff","C","Other configura..."],
    ["c","#fff","E","DEV_OE"],["c","#fff","R","DEV_CLR"],["h","#fff","n","DIFF_n"],["h","#fff","p","DIFF_p"],
    ["c","#fff","Q","DQ"],["c","#fff","S","DQS"],["b","#fff","n","CLK_n"],["b","#fff","p","CLK_p"],
    ["c","#fff","L","Other PLL"],["c","#fff","D","Other dual purp..."],["y","#fff","0","MSEL0"],["y","#fff","1","MSEL1"],
    ["y","#fff","2","MSEL2"],["y","#fff","3","MSEL3"],["y","#fff","D","CONF_DONE"],["y","#fff","E","nCE"],
    ["y","#fff","F","nCONFIG"],["y","#fff","I","TDI"]
  ];
  document.getElementById("legend").innerHTML = legend.map(([s, fill, t, name]) => {
    let g = "";
    if (s === "c") g = `<circle cx="9" cy="9" r="7.5" fill="${fill}" stroke="#808080"/>` + label(9, 12, t, RED);
    if (s === "h") g = `<polygon points="2,9 5.500,3 12.500,3 16,9 12.500,15 5.500,15" fill="#fff" stroke="#808080"/>` + label(9, 12, t, RED);
    if (s === "b") g = `<rect x="1.500" y="1.500" width="15" height="15" fill="#fff" stroke="#808080"/><path d="${t === "n" ? "M5 5h4v8h4" : "M5 13h4V5h4"}" fill="none" stroke="#555"/>`;
    if (s === "y") g = `<polygon points="9,1 17,8 13,16 5,16 1,8" fill="#fff" stroke="#a0a0a0"/>` + label(9, 12, t, "#b8b020");
    return `<div class="h-[23px] flex items-center pl-[3px]"><svg class="shrink-0" width="18" height="18" viewBox="0 0 18 18">${g}</svg><span class="ml-[31px] whitespace-nowrap">${name}</span></div>`;
  }).join("");
</script>
</body>
</html>
